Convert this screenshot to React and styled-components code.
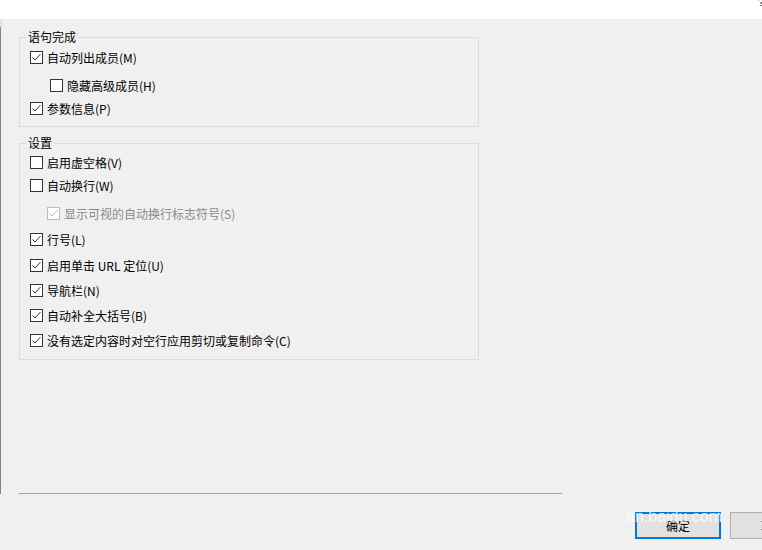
import React from 'react';
import styled, { createGlobalStyle } from 'styled-components';

const GlobalStyle = createGlobalStyle`
    html, body {
        margin: 0;
        padding: 0;
        background: #f0f0f0;
    }
    body {
        font-family: "Noto Sans CJK SC", "Microsoft YaHei UI", sans-serif;
        font-size: 12px;
        color: #000;
        overflow: hidden;
    }
`;

const completionItems = [
    { label: '自动列出成员(M)', checked: true, mt: 4 },
    { label: '隐藏高级成员(H)', checked: false, indent: 20, mt: 12 },
    { label: '参数信息(P)', checked: true, mt: 7 },
];

const settingItems = [
    { label: '启用虚空格(V)', checked: false, mt: 3 },
    { label: '自动换行(W)', checked: false, mt: 7 },
    { label: '显示可视的自动换行标志符号(S)', checked: true, disabled: true, indent: 17, mt: 12 },
    { label: '行号(L)', checked: true, mt: 10 },
    { label: '启用单击 URL 定位(U)', checked: true, mt: 10 },
    { label: '导航栏(N)', checked: true, mt: 9 },
    { label: '自动补全大括号(B)', checked: true, mt: 9 },
    { label: '没有选定内容时对空行应用剪切或复制命令(C)', checked: true, mt: 9 },
];

function CheckBox({ checked, disabled }) {
    return (
        <Box $disabled={disabled}>
            {checked && (
                <svg width="11" height="11" viewBox="0 0 11 11">
                    <polyline
                        points="1.5,5.5 4,8 9.5,2"
                        fill="none"
                        stroke={disabled ? '#bcbcbc' : '#333'}
                        strokeWidth="1"
                    />
                </svg>
            )}
        </Box>
    );
}

function Group({ title, items, $pb }) {
    return (
        <GroupBox $pb={$pb}>
            <Legend>{title}</Legend>
            {items.map((item) => (
                <Row key={item.label} $mt={item.mt} $indent={item.indent || 0} $disabled={item.disabled}>
                    <CheckBox checked={item.checked} disabled={item.disabled} />
                    <span>{item.label}</span>
                </Row>
            ))}
        </GroupBox>
    );
}

function App() {
    return (
        <Page>
            <GlobalStyle />
            <TitleBar>
                <HelpMark>?</HelpMark>
            </TitleBar>
            <Main>
                <Group title="语句完成" items={completionItems} $pb={10} />
                <Group title="设置" items={settingItems} $pb={11} />
                <Spacer />
                <Separator />
            </Main>
            <Footer>
                <Button $primary>确定</Button>
                <Button>取消</Button>
                <Watermark>an.baidu.com</Watermark>
            </Footer>
        </Page>
    );
}

const Page = styled.div`
    width: 762px;
    height: 550px;
    overflow: hidden;
    background: #f0f0f0;
    display: flex;
    flex-direction: column;
`;

const TitleBar = styled.div`
    height: 19px;
    flex-shrink: 0;
    background: #fff;
    display: flex;
    justify-content: flex-end;
    align-items: flex-start;
    overflow: hidden;
`;

const HelpMark = styled.span`
    font-family: "Liberation Sans", sans-serif;
    font-size: 11px;
    line-height: 11px;
    margin-top: -3px;
    margin-right: -2px;
    color: #000;
`;

const Main = styled.div`
    position: relative;
    box-sizing: border-box;
    height: 475px;
    flex-shrink: 0;
    border-left: 1px solid #7d8794;
    padding: 10px 0 0 18px;
    display: flex;
    flex-direction: column;

    &::before {
        content: '';
        position: absolute;
        left: -1px;
        top: 0;
        width: 2px;
        height: 8px;
        background: #dce3ec;
    }
`;

const GroupBox = styled.fieldset`
    width: 460px;
    box-sizing: border-box;
    margin: 0 0 8px 0;
    padding: 0 0 ${(props) => props.$pb}px 10px;
    border: 1px solid #dcdcdc;
    min-inline-size: auto;
`;

const Legend = styled.legend`
    margin-left: -4px;
    padding: 0 2px;
    line-height: 16px;
    font-size: 12px;
`;

const Row = styled.div`
    display: flex;
    align-items: center;
    height: 16px;
    margin-top: ${(props) => props.$mt}px;
    padding-left: ${(props) => props.$indent}px;
    gap: 4px;
    white-space: nowrap;
    color: ${(props) => (props.$disabled ? '#8a8a8a' : '#000')};
`;

const Box = styled.span`
    width: 13px;
    height: 13px;
    box-sizing: border-box;
    border: 1px solid ${(props) => (props.$disabled ? '#bcbcbc' : '#333')};
    background: #fff;
    display: flex;
    align-items: center;
    justify-content: center;
    flex-shrink: 0;
`;

const Spacer = styled.div`
    flex: 1;
`;

const Separator = styled.div`
    width: 543px;
    height: 1px;
    background: #a0a0a0;
`;

const Footer = styled.div`
    position: relative;
    flex: 1;
    display: flex;
    align-items: flex-start;
    gap: 9px;
    padding: 18px 0 0 635px;
`;

const Button = styled.div`
    width: 86px;
    height: 27px;
    flex-shrink: 0;
    box-sizing: border-box;
    border: ${(props) => (props.$primary ? '2px solid #0078d7' : '1px solid #adadad')};
    background: #e1e1e1;
    display: flex;
    align-items: center;
    justify-content: center;
    font-size: 12px;
`;

const Watermark = styled.div`
    position: absolute;
    left: 626px;
    top: 14px;
    font-family: "Liberation Sans", sans-serif;
    font-size: 16px;
    line-height: 18px;
    color: rgba(255, 255, 255, 0.8);
    pointer-events: none;
    white-space: nowrap;
`;

export default App;
